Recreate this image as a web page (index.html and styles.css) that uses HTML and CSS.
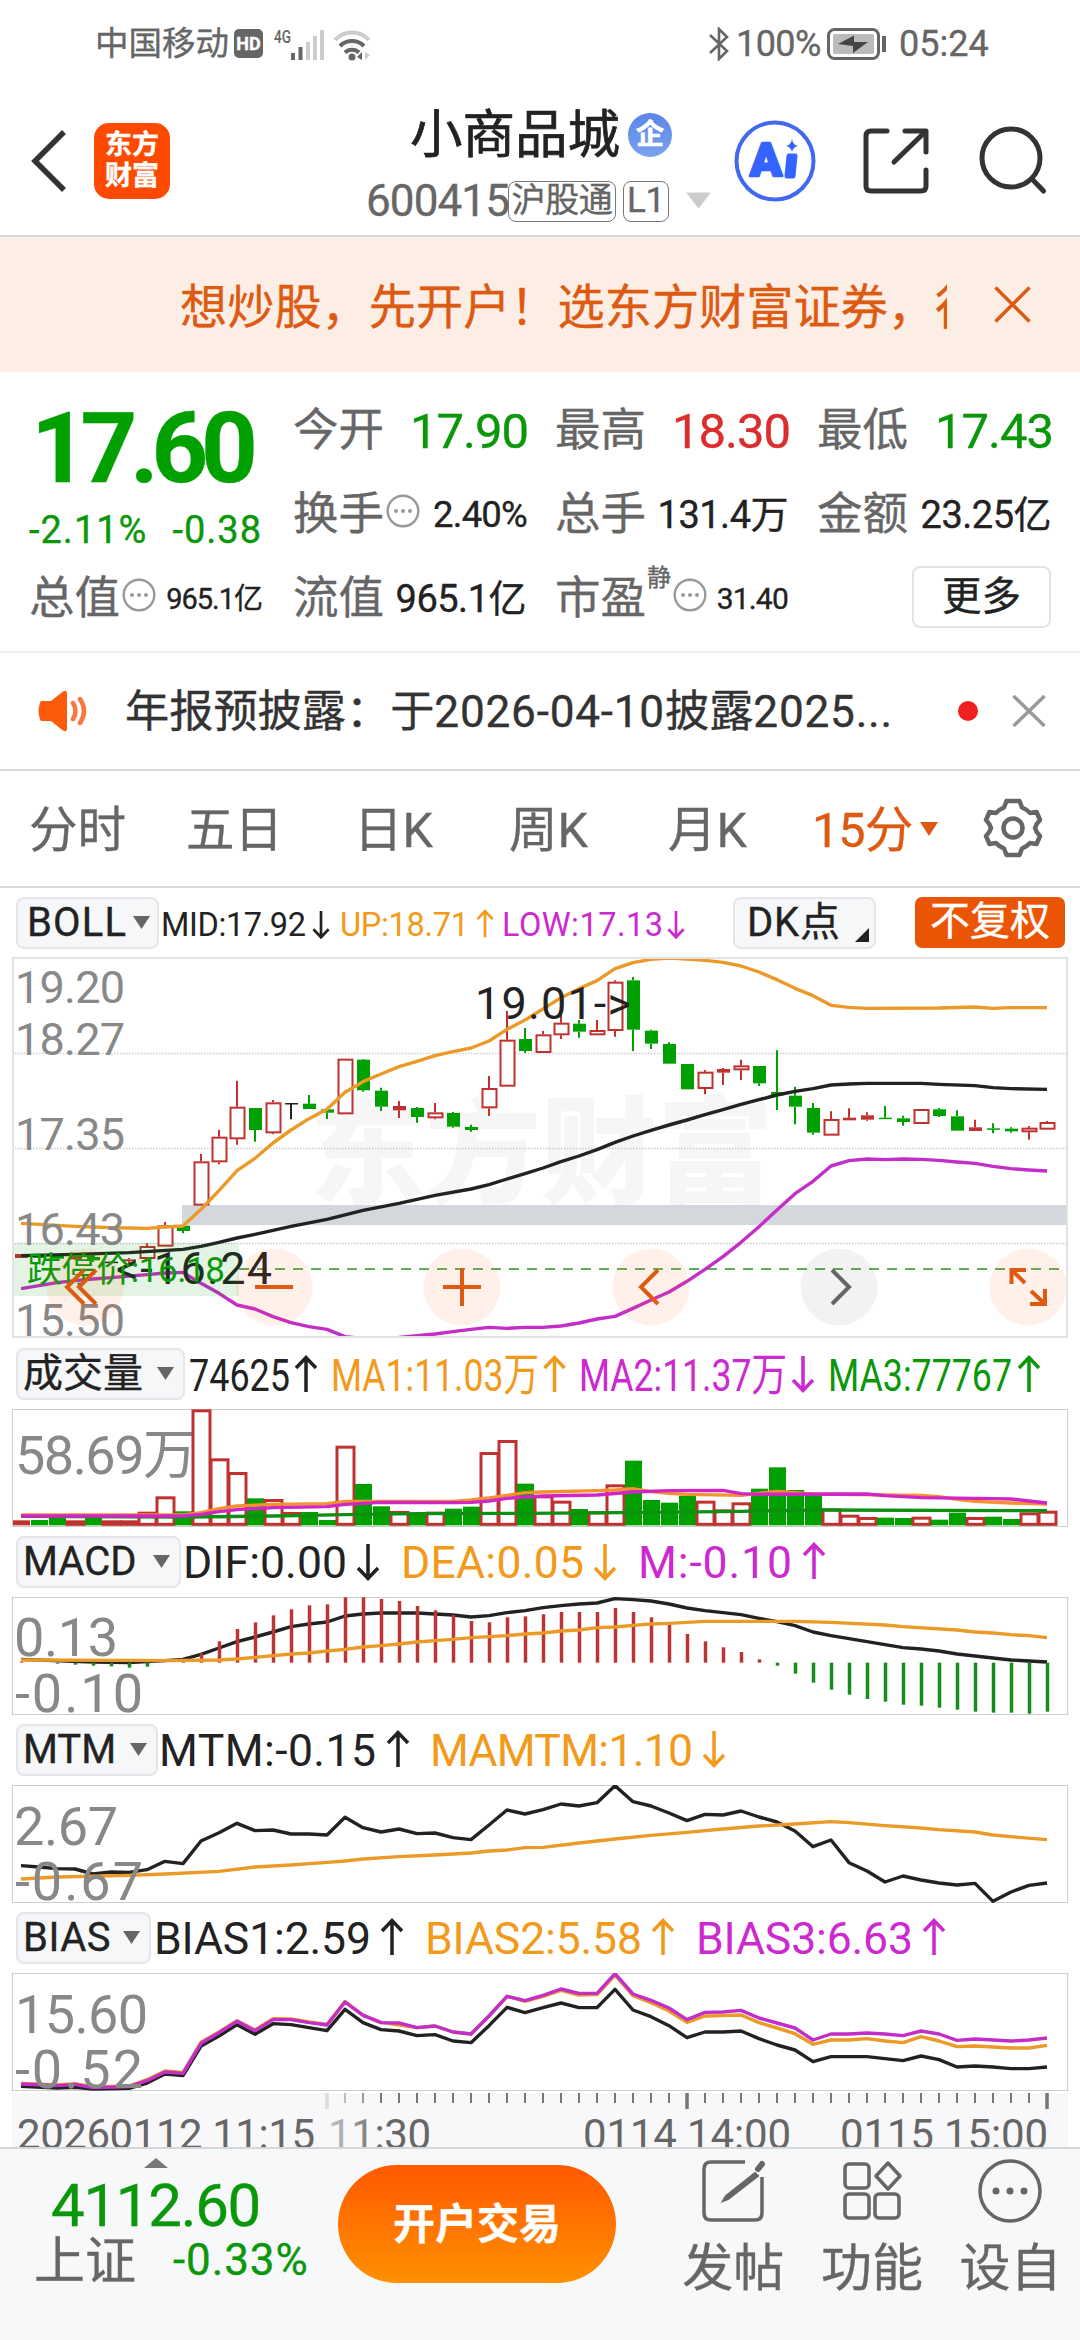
FILE: index.html
```html
<!DOCTYPE html>
<html lang="zh-CN">
<head>
<meta charset="utf-8">
<title>小商品城 600415</title>
<link rel="stylesheet" href="styles.css">
</head>
<body>
<svg width="0" height="0" class="defs" aria-hidden="true">
  <defs>
    <path id="up" d="M0 36V1.5M-10 12L0 1.5L10 12"/>
    <path id="down" d="M0 0V34.5M-10 24L0 34.5L10 24"/>
    <g id="more"><circle cx="17" cy="17" r="15.3" fill="none" stroke="#999" stroke-width="2.4"/><g fill="#999"><circle cx="10" cy="17" r="2"/><circle cx="17" cy="17" r="2"/><circle cx="24" cy="17" r="2"/></g></g>
    <path id="tri" d="M0 0H17L8.5 13Z"/>
  </defs>
</svg>

<div class="status">
  <span class="carrier">中国移动</span>
  <span class="hd">HD</span>
  <svg class="signal" width="102" height="38" viewBox="270 22 102 38">
    <text x="274" y="40" font-size="18" font-weight="500" textLength="17" lengthAdjust="spacingAndGlyphs" fill="#666">4G</text>
    <g fill="#666"><rect x="291" y="50" width="4" height="7"/><rect x="298.500" y="44" width="4" height="13"/></g>
    <g fill="#ccc"><rect x="306" y="39" width="4" height="18"/><rect x="313" y="33" width="4" height="24"/><rect x="320" y="27" width="4" height="30"/></g>
    <g fill="none" stroke-width="4"><path d="M335 37a23 23 0 0 1 34 0" stroke="#ccc"/><path d="M340 43a17 17 0 0 1 24 0M345 49.500a10 10 0 0 1 14 0" stroke="#666"/></g>
    <circle cx="352" cy="54" r="3.500" fill="#666"/><path d="M357 54l5-5v8z" fill="#666"/><path d="M365 49v8l5-5z" fill="#ccc"/>
  </svg>
  <svg class="bt" width="22" height="34" viewBox="0 0 22 34" fill="none" stroke="#666" stroke-width="2.600"><path d="M2 8L19 24L11 32V2L19 10L2 26"/></svg>
  <span class="pct">100%</span>
  <svg class="battery" width="61" height="32" viewBox="0 0 61 32"><rect x="1.500" y="1.500" width="50" height="29" rx="6" fill="none" stroke="#666" stroke-width="3"/><rect x="6" y="6" width="41" height="20" rx="2" fill="#bbb"/><path d="M11 16L27 7.500V14H41L26 25V18Z" fill="#444"/><path d="M57 8v16" stroke="#666" stroke-width="4"/></svg>
  <span class="clock">05:24</span>
</div>

<header class="header">
  <svg class="back" width="38" height="64" viewBox="0 0 38 64" fill="none" stroke="#333" stroke-width="5.500"><path d="M34 3L5 32L34 61"/></svg>
  <div class="logo"><span>东方</span><span>财富</span></div>
  <div class="title">
    <div class="name">小商品城<span class="badge">企</span></div>
    <div class="code"><span class="num">600415</span><span class="tag">沪股通</span><span class="tag tag-l1">L1</span><svg width="25" height="18" viewBox="0 0 25 18"><path d="M1 1H24L12.500 16Z" fill="#ccc" stroke="#ccc"/></svg></div>
  </div>
  <svg class="tools" width="330" height="90" viewBox="730 115 330 90" fill="none" stroke="#333" stroke-width="5" stroke-linecap="round" stroke-linejoin="round">
    <circle cx="775" cy="161" r="38.500" stroke="#4169f0" stroke-width="4"/>
    <text class="ai" x="750" y="176" textLength="32" lengthAdjust="spacingAndGlyphs" stroke="#3563ff" stroke-width="2.500" fill="#3563ff">A</text>
    <path d="M789 156h6l-2 20h-6z" stroke="#3563ff" stroke-width="5" fill="#3563ff"/>
    <path d="M792 139q1 6 6 7q-5 1-6 6q-1-5-6-6q5-1 6-7z" fill="#3563ff" stroke="none"/>
    <path d="M887 131H871Q866 131 866 136V186Q866 191 871 191H921Q926 191 926 186V170M905 131H926V152M894 162L925 132"/>
    <circle cx="1011" cy="158" r="29"/><path d="M1032 179L1043.500 191"/>
  </svg>
</header>

<div class="banner">
  <div class="marquee">想炒股，先开户！选东方财富证券，行情交易</div>
  <svg width="37" height="37" viewBox="0 0 37 37" stroke="#dd5a12" stroke-width="3.500"><path d="M1.500 1.500L35.500 35.500M35.500 1.500L1.500 35.500"/></svg>
</div>

<section class="quote">
  <div class="price">17.60</div>
  <div class="change"><span>-2.11%</span><span>-0.38</span></div>
  <div class="f a1"><label>今开</label><b class="g lg">17.90</b></div>
  <div class="f b1"><label>最高</label><b class="r lg">18.30</b></div>
  <div class="f c1"><label>最低</label><b class="g lg">17.43</b></div>
  <div class="f a2"><label>换手</label><svg class="info" width="34" height="34"><use href="#more"/></svg><b class="md">2.40%</b></div>
  <div class="f b2"><label>总手</label><b>131.4万</b></div>
  <div class="f c2"><label>金额</label><b>23.25亿</b></div>
  <div class="f z3"><label>总值</label><svg class="info" width="34" height="34"><use href="#more"/></svg><b class="sm">965.1亿</b></div>
  <div class="f a3"><label>流值</label><b>965.1亿</b></div>
  <div class="f b3"><label>市盈</label><sup>静</sup><svg class="info" width="34" height="34"><use href="#more"/></svg><b class="sm2">31.40</b></div>
  <div class="more-btn">更多</div>
</section>

<div class="notice">
  <svg width="50" height="42" viewBox="0 0 50 42"><path d="M2 13Q2 11 4 11H13L25 1.500Q29-1 29 4V38Q29 43 25 40.500L13 31H4Q2 31 2 29Q-1 21 2 13Z" fill="#fe5a0b"/><path d="M35 13Q40 21 35 29M42 9Q50 21 42 33" fill="none" stroke="#f9773a" stroke-width="4.500" stroke-linecap="round"/></svg>
  <span class="msg">年报预披露：于<span class="wide">2026-04-10</span>披露<span class="wide">2025...</span></span>
  <i class="dot"></i>
  <svg width="34" height="32" viewBox="0 0 34 32" stroke="#999" stroke-width="3.500"><path d="M1.500 1L32.500 31M32.500 1L1.500 31"/></svg>
</div>

<nav class="tabs">
  <span>分时</span><span>五日</span><span>日K</span><span>周K</span><span>月K</span>
  <span class="on">15分<svg width="19" height="14" viewBox="0 0 19 14"><path d="M0 0H18L9 14Z" fill="#dd5a12"/></svg></span>
  <svg class="gear" width="60" height="60" viewBox="-30 -30 60 60" fill="none" stroke="#666" stroke-width="4.500" stroke-linejoin="round"><path d="M-6.500-27H6.500L9-20.500Q14-18.500 17-15L23.500-16L27-8Q23-4 22 0Q23 4 27 8L23.500 16L17 15Q14 18.500 9 20.500L6.500 27H-6.500L-9 20.500Q-14 18.500-17 15L-23.500 16L-27 8Q-23 4-22 0Q-23-4-27-8L-23.500-16L-17-15Q-14-18.500-9-20.500Z"/><circle r="9.500"/></svg>
</nav>

<section class="charts">
  <div class="ind top">
    <div class="pick boll"><span>BOLL</span><svg width="17" height="14"><use href="#tri"/></svg></div>
    <svg class="readout" width="570" height="70" viewBox="159 0 570 70">
      <g class="ink"><text x="161" y="48" font-size="32.500" textLength="145">MID:17.92</text><use href="#down" transform="translate(321 23) scale(.76)"/></g>
      <g class="amber"><text x="340" y="48" font-size="32.500" textLength="129">UP:18.71</text><use href="#up" transform="translate(485 22) scale(.76)"/></g>
      <g class="violet"><text x="502" y="48" font-size="32.500" textLength="161">LOW:17.13</text><use href="#down" transform="translate(676 23) scale(.76)"/></g>
    </svg>
    <div class="pick dk"><span>DK点</span><svg width="14" height="14"><path d="M14 0V14H0Z" fill="#222"/></svg></div>
    <div class="adjust">不复权</div>
  </div>

  <svg class="plot main" width="1056" height="381" viewBox="0 0 1056 381">
    <text class="watermark" x="297" y="237" textLength="464">东方财富</text>
    <path class="grid" d="M0 96.500H1056M0 191.500H1056M0 286.500H1056"/>
    <rect x="170" y="248" width="886" height="20" fill="#d4d7dc"/>
    <path d="M227 312H1056" stroke="#5fae5f" stroke-width="2" stroke-dasharray="10 8"/>
    <g id="candles"></g>
    <g id="boll"></g>
    <g class="scale" font-size="45">
      <text x="3" y="45.500" textLength="110">19.20</text><text x="3" y="97.500" textLength="110">18.27</text><text x="3" y="193" textLength="110">17.35</text><text x="3" y="288" textLength="110">16.43</text><text x="3" y="379" textLength="110">15.50</text>
    </g>
    <g class="ink" font-size="45"><text x="463" y="62" textLength="156">19.01-&gt;</text><text x="104" y="327" textLength="156">&lt;-16.24</text></g>
    <path d="M0 286H221Q227 286 227 292V339H0Z" fill="#0a9c0a" fill-opacity=".11"/>
    <text x="15" y="325" font-size="35" textLength="198" fill="#0a9a0a">跌停价:16.18</text>
    <g fill="#ff5a00" fill-opacity=".085"><circle cx="73" cy="330" r="38.500"/><circle cx="262" cy="330" r="38.500"/><circle cx="450" cy="330" r="38.500"/><circle cx="639" cy="330" r="38.500"/><circle cx="1016" cy="330" r="38.500"/></g>
    <circle cx="827" cy="330" r="38.500" fill="#000" fill-opacity=".05"/>
    <g fill="none" stroke="#dd5a12" stroke-width="4">
      <path d="M72 313L55 330L72 347M84 313L67 330L84 347"/>
      <path d="M243 330H281M431 330H469M450 311V349"/>
      <path d="M646 313L629 330L646 347"/>
      <path d="M1014 313H999.500V327M999.500 313L1013 326M1018 347H1033V332M1033 347L1019 334"/>
    </g>
    <path d="M820 313L837 330L820 347" fill="none" stroke="#666" stroke-width="4"/>
    <rect class="frame" x="1" y="1" width="1054" height="379" stroke-width="2" style="stroke:#e3e3e3"/>
  </svg>

  <div class="ind vol">
    <div class="pick"><span>成交量</span><svg width="17" height="14"><use href="#tri"/></svg></div>
    <svg class="readout" width="882" height="71" viewBox="185 0 882 71" font-size="45">
      <g class="ink"><text x="189" y="53" textLength="101" lengthAdjust="spacingAndGlyphs">74625</text><use href="#up" x="306" y="18"/></g>
      <g class="amber"><text x="331" y="53" textLength="208" lengthAdjust="spacingAndGlyphs">MA1:11.03万</text><use href="#up" x="554.500" y="18"/></g>
      <g class="violet"><text x="579" y="53" textLength="208" lengthAdjust="spacingAndGlyphs">MA2:11.37万</text><use href="#down" x="803" y="18"/></g>
      <g class="green"><text x="828" y="53" textLength="184" lengthAdjust="spacingAndGlyphs">MA3:77767</text><use href="#up" x="1029" y="18"/></g>
    </svg>
  </div>
  <svg class="plot" width="1056" height="118" viewBox="0 0 1056 118">
    <rect class="frame" x=".5" y=".5" width="1055" height="117"/>
    <g class="scale" font-size="54"><text x="3" y="65" textLength="182">58.69万</text></g>
    <g id="volume"></g>
  </svg>

  <div class="ind">
    <div class="pick macd"><span>MACD</span><svg width="17" height="14"><use href="#tri"/></svg></div>
    <svg class="readout" width="880" height="70" viewBox="181 0 880 70" font-size="44.500">
      <g class="ink"><text x="183" y="51" textLength="164">DIF:0.00</text><use href="#down" x="368" y="17"/></g>
      <g class="amber"><text x="401" y="51" textLength="183">DEA:0.05</text><use href="#down" x="605" y="17"/></g>
      <g class="violet"><text x="638" y="51" textLength="154">M:-0.10</text><use href="#up" x="814" y="16"/></g>
    </svg>
  </div>
  <svg class="plot" width="1056" height="118" viewBox="0 0 1056 118">
    <rect class="frame" x=".5" y=".5" width="1055" height="117"/>
    <g class="scale" font-size="54"><text x="2" y="59" textLength="104">0.13</text><text x="3" y="115" textLength="128">-0.10</text></g>
    <g id="macd"></g>
  </svg>

  <div class="ind">
    <div class="pick mtm"><span>MTM</span><svg width="17" height="14"><use href="#tri"/></svg></div>
    <svg class="readout" width="880" height="70" viewBox="158 0 880 70" font-size="44.500">
      <g class="ink"><text x="159" y="51" textLength="217">MTM:-0.15</text><use href="#up" x="398" y="16"/></g>
      <g class="amber"><text x="430" y="51" textLength="263">MAMTM:1.10</text><use href="#down" x="714" y="16"/></g>
    </svg>
  </div>
  <svg class="plot" width="1056" height="118" viewBox="0 0 1056 118">
    <rect class="frame" x=".5" y=".5" width="1055" height="117"/>
    <g id="mtm"></g>
    <g class="scale" font-size="54"><text x="2" y="60" textLength="104">2.67</text><text x="3" y="115" textLength="128">-0.67</text></g>
  </svg>

  <div class="ind">
    <div class="pick bias"><span>BIAS</span><svg width="17" height="14"><use href="#tri"/></svg></div>
    <svg class="readout" width="880" height="70" viewBox="151 0 880 70" font-size="44.500">
      <g class="ink"><text x="154" y="51" textLength="217">BIAS1:2.59</text><use href="#up" x="392" y="16"/></g>
      <g class="amber"><text x="425" y="51" textLength="217">BIAS2:5.58</text><use href="#up" x="663" y="16"/></g>
      <g class="violet"><text x="696" y="51" textLength="217">BIAS3:6.63</text><use href="#up" x="934" y="16"/></g>
    </svg>
  </div>
  <svg class="plot" width="1056" height="118" viewBox="0 0 1056 118">
    <rect class="frame" x=".5" y=".5" width="1055" height="117"/>
    <g id="bias"></g>
    <g class="scale" font-size="54"><text x="3" y="60" textLength="133">15.60</text><text x="3" y="115" textLength="128">-0.52</text></g>
  </svg>

  <svg class="axis" width="1056" height="54" viewBox="0 0 1056 54">
    <defs><linearGradient id="fade" gradientUnits="userSpaceOnUse" x1="312" x2="372" y1="0" y2="0"><stop offset="0" stop-color="#ccc"/><stop offset="1" stop-color="#666"/></linearGradient></defs>
    <g id="ticks"></g>
    <g font-size="42" fill="#666"><text x="5" y="56" textLength="298">20260112 11:15</text><text x="316" y="56" textLength="103" fill="url(#fade)">11:30</text><text x="571" y="56" textLength="208">0114 14:00</text><text x="828" y="56" textLength="208">0115 15:00</text></g>
  </svg>
</section>

<footer class="bottom">
  <div class="index">
    <svg width="24" height="10" viewBox="0 0 24 10"><path d="M0 10L12 0L24 10Z" fill="#777"/></svg>
    <div class="ix-val">4112.60</div>
    <div class="ix-row"><span class="ix-name">上证</span><span class="ix-chg">-0.33%</span></div>
  </div>
  <div class="cta">开户交易</div>
  <div class="act"><svg width="64" height="64" viewBox="0 0 64 64" fill="none" stroke="#666" stroke-width="3.500"><path d="M44 3H10Q3 3 3 10V54Q3 61 10 61H54Q61 61 61 54V18"/><path d="M54 14L25 37L22 42L27 40L57 17Z" fill="#666" stroke-width="2"/><path d="M57 10L61 5" stroke-width="6" stroke-linecap="round"/></svg><span>发帖</span></div>
  <div class="act"><svg width="64" height="64" viewBox="0 0 64 64" fill="none" stroke="#666" stroke-width="3.500"><rect x="5" y="5" width="24" height="24" rx="4"/><rect x="5" y="35" width="24" height="24" rx="4"/><rect x="35" y="35" width="24" height="24" rx="4"/><path d="M48 4L60 17L48 30L36 17Z" stroke-linejoin="round"/></svg><span>功能</span></div>
  <div class="act"><svg width="64" height="64" viewBox="0 0 64 64"><circle cx="32" cy="32" r="30" fill="none" stroke="#666" stroke-width="3.500"/><g fill="#666"><circle cx="18" cy="32" r="3.500"/><circle cx="32" cy="32" r="3.500"/><circle cx="46" cy="32" r="3.500"/></g></svg><span>设自</span></div>
</footer>
<script src="charts.js"></script>
</body>
</html>
```

FILE: styles.css
```css
* { box-sizing: border-box; }
body { margin: 0; width: 1080px; height: 2340px; overflow: hidden; background: #fff; color: #222; font-family: Roboto, "Noto Sans CJK SC", sans-serif; line-height: 1; -webkit-text-stroke: .35px; }
svg { display: block; flex: none; }
.defs { position: absolute; }
svg text { font-family: Roboto, "Noto Sans CJK SC", sans-serif; }

/* status bar */
.status { height: 80px; padding: 7px 0 0 95px; display: flex; align-items: center; color: #666; white-space: nowrap; }
.carrier { font-size: 33.5px; width: 139px; }
.hd { width: 29px; height: 29px; border-radius: 5px; background: #666; color: #fff; font-size: 18px; font-weight: 700; line-height: 30px; text-align: center; margin-right: 7px; }
.bt { margin-left: 336px; }
.pct { font-size: 36px; width: 97px; padding-left: 6px; letter-spacing: -.6px; }
.clock { font-size: 36px; margin-left: 11px; }

/* header */
.header { height: 157px; border-bottom: 2px solid #d8d8d8; display: flex; align-items: flex-start; padding-left: 30px; }
.back { margin-top: 49px; }
.logo { margin: 43px 0 0 26px; width: 76px; height: 76px; border-radius: 15px; background: #fe4a00; color: #fff; font-size: 27px; font-weight: 700; display: flex; flex-direction: column; align-items: center; justify-content: center; gap: 4px; }
.title { width: 370px; margin: 28px 0 0 190px; }
.name { font-size: 52.5px; height: 54px; line-height: 54px; margin-left: 50px; display: flex; align-items: center; white-space: nowrap; -webkit-text-stroke: .7px; }
.badge { width: 44px; height: 44px; border-radius: 50%; background: linear-gradient(#5b86e8, #7aa1ec); color: #fff; font-size: 28px; font-weight: 700; line-height: 43px; text-align: center; margin-left: 8px; }
.code { display: flex; align-items: center; height: 42px; margin-top: 18px; margin-left: 6px; color: #666; }
.num { font-size: 44px; letter-spacing: -.9px; width: 142px; }
.tag { height: 41px; width: 108px; border: 1.5px solid #777; border-radius: 8px; font-size: 34px; line-height: 37px; text-align: center; white-space: nowrap; letter-spacing: -.3px; }
.tag-l1 { width: 46px; margin: 0 17px 0 7px; font-size: 35px; }
.tools { margin: 35px 0 0 0; }
.ai { font-size: 46px; font-weight: 900; }

/* banner */
.banner { height: 135px; background: #fdeee5; color: #dd5a12; display: flex; align-items: center; padding-left: 180px; }
.marquee { width: 767px; margin-right: 47px; overflow: hidden; white-space: nowrap; font-size: 47.200px; line-height: 64px; padding-top: 7px; }

/* quote */
.quote { height: 281px; border-bottom: 2px solid #eee; display: grid; grid-template: "p a1 b1 c1" 84px "q a2 b2 c2" 84px "z3 a3 b3 m" 84px / 233px 231px 231px 232px; column-gap: 31px; padding: 17px 0 0 29px; }
.price { grid-area: p; font-size: 99px; font-weight: 700; color: #00a000; letter-spacing: -7.3px; line-height: 118px; padding-left: 2px; }
.change { grid-area: q; display: flex; justify-content: space-between; color: #0a970a; font-size: 38px; padding-top: 38px; letter-spacing: 1px; }
.f { display: flex; align-items: center; justify-content: space-between; white-space: nowrap; }
.f label { font-size: 45.500px; color: #666; }
.f b { font-weight: 400; font-size: 38px; color: #222; letter-spacing: -.5px; margin-right: -2px; }
.f .lg { font-size: 49px; letter-spacing: -1px; margin-right: -4px; }
.f .md { font-size: 36.500px; letter-spacing: -.8px; margin-right: -3px; }
.f .sm { font-size: 29px; letter-spacing: -1px; margin-right: 0; }
.f .sm2 { font-size: 30px; letter-spacing: -.8px; margin-right: -2px; }
.f .g { color: #0a970a; }
.f .r { color: #dc2c2c; }
.info { margin: -8px auto 0 2px; }
.f sup { font-size: 24px; align-self: flex-start; margin: 9px 0 0 1px; color: #666; }
.a1 { grid-area: a1; } .b1 { grid-area: b1; } .c1 { grid-area: c1; }
.a2 { grid-area: a2; } .b2 { grid-area: b2; } .c2 { grid-area: c2; }
.z3 { grid-area: z3; } .a3 { grid-area: a3; } .b3 { grid-area: b3; }
.more-btn { grid-area: m; justify-self: end; align-self: center; width: 139px; height: 62px; margin: -4px -2px 0 0; border: 2px solid #e4e4e4; border-radius: 8px; font-size: 39.500px; line-height: 58px; text-align: center; }

/* notice */
.notice { height: 118px; border-bottom: 2px solid #d8d8d8; display: flex; align-items: center; padding-left: 38px; color: #333; }
.msg { margin-left: 37px; width: 833px; font-size: 44.200px; white-space: nowrap; padding-top: 2px; }
.wide { letter-spacing: .75px; }
.dot { width: 20px; height: 20px; border-radius: 50%; background: #f02020; margin-right: 34px; }

/* period tabs */
.tabs { height: 117px; border-bottom: 2px solid #d8d8d8; display: grid; grid-template-columns: 157px 168px 155px 159px 144px 171px 60px; align-items: center; padding-left: 29px; font-size: 48.500px; color: #666; white-space: nowrap; }
.tabs span { padding-top: 5px; }
.tabs .on { color: #dd5a12; display: flex; align-items: center; gap: 8px; letter-spacing: -.9px; }
.tabs .on svg { margin-top: -4px; }
.gear { margin-top: -2px; }

/* indicator rows */
.ind { height: 70px; display: flex; align-items: center; padding-left: 16px; }
.top { height: 69px; }
.vol { height: 71px; }
.pick { height: 52px; width: 169px; background: #f6f7f9; border: 2px solid #e5e6ea; border-radius: 8px; display: flex; align-items: center; justify-content: space-between; padding: 0 9px 0 5px; font-size: 40px; white-space: nowrap; fill: #666; flex: none; }
.pick.boll { width: 143px; padding: 0 7px 0 9px; letter-spacing: 1.200px; }
.pick.dk { width: 143px; margin-left: 4px; padding: 0 5px 0 12px; letter-spacing: .8px; }
.pick.dk svg { align-self: flex-end; margin-bottom: 5px; }
.pick.macd { width: 165px; } .pick.mtm { width: 142px; } .pick.bias { width: 135px; letter-spacing: .5px; }
.adjust { margin-left: 39px; width: 150px; height: 51px; border-radius: 7px; background: #ea5504; color: #fff; font-size: 40px; line-height: 49px; text-align: center; }
.readout use, .ink use { fill: none; stroke: currentColor; stroke-width: 3.500; }
.readout text { fill: currentColor; }
.ink { color: #222; fill: #222; } .amber { color: #f29a1c; } .violet { color: #cc29cf; } .green { color: #0a970a; }

/* plots */
.plot, .axis { margin: 0 12px; overflow: hidden; }
.frame { fill: none; stroke: #ccc; }
.grid { stroke: #ccc; stroke-width: 1.500; stroke-dasharray: 1.500 1.500; }
.watermark { font-size: 116px; font-weight: 900; fill: #f6f6f6; }
.scale { fill: #888; }
.axis { background: #f8f8fa; margin-top: 2px; }

/* bottom bar */
.bottom { height: 193px; border-top: 2px solid #d4d6d8; background: #f7f8fa; display: flex; align-items: flex-start; }
.index { width: 338px; padding: 9px 0 0 34px; }
.index svg { margin-left: 110px; }
.ix-val { font-size: 60px; color: #0a970a; margin: 8px 0 0 17px; letter-spacing: -1.300px; }
.ix-row { display: flex; align-items: center; margin-top: -6px; height: 62px; }
.ix-name { font-size: 51px; color: #666; width: 139px; }
.ix-chg { font-size: 44px; color: #0a970a; margin-top: -2px; letter-spacing: .9px; }
.cta { width: 278px; height: 118px; margin: 16px 48px 0 0; border-radius: 59px; background: linear-gradient(#ff5900, #ff9000); color: #fff; font-size: 42px; font-weight: 700; line-height: 116px; text-align: center; padding-top: 2px; }
.act { width: 138.600px; display: flex; flex-direction: column; align-items: center; padding-top: 10px; color: #666; font-size: 51px; white-space: nowrap; }
.act span { margin-top: 20px; }
```

FILE: charts.js
```js
// Every plot shares one time axis: 58 bars, 18px apart.
const X = i => 9 + 18 * i;
const RED = '#c0322f', GREEN = '#00a000', INK = '#222', AMBER = '#eb9a28', VIOLET = '#c42ec8';
const put = (id, html) => { document.getElementById(id).innerHTML += html; };

// Levels are stored in third-pixels, measured from each plot's own origin.
const scaleFrom = origin => v => +((v - origin) / 3).toFixed(2);
const line = (y, color, pts, w = 3.4) => {
  const p = [];
  for (let k = 0; k < pts.length; k += 2) p.push(X(pts[k]) + ',' + y(pts[k + 1]));
  return `<polyline points="${p.join(' ')}" fill="none" stroke="${color}" stroke-width="${w}" stroke-linejoin="round"/>`;
};
const seq = list => list.flatMap((v, i) => [i, v]);

// r hollow red, f filled red, g green, k flat bar; then high, body top, body bottom, low
let y = scaleFrom(51);
const bars = [
  'f942 942 954 954','g946 946 954 954','g943 946 956 958','f940 946 958 960','g947 951 961 966','k965 965 965 965','f954 958 964 969','r910 918 957 957','r846 856 920 920','g857 857 873 880',
  'r642 664 797 797','r570 590 667 673','r422 500 598 614','g504 504 570 605','r480 487 580 583','k489 489 489 538','g465 491 507 507','g507 508 518 537','r356 356 523 523','g357 359 451 455',
  'g443 452 500 513','f483 498 511 534','g501 504 531 548','r489 517 535 538','g516 519 560 563','g554 561 570 575','r408 444 505 528','r213 299 440 440','g264 297 333 338','r273 283 339 339',
  'r224 248 286 297','g240 251 275 293','r240 270 286 286','r121 125 273 290','g111 121 269 333','g269 272 311 327','g307 312 371 372','g372 372 448 448','r390 395 447 463','f384 387 398 435',
  'r359 376 391 420','g378 378 430 438','g331 456 466 510','g440 467 500 553','g489 504 578 584','r514 537 587 587','f505 533 541 541','f517 526 539 542','g498 533 536 536','g527 535 546 557',
  'r507 507 552 552','g504 508 528 531','g511 529 572 572','f539 562 573 573','g550 565 567 580','g562 566 574 578','r558 563 577 599','r543 546 569 569'];
put('candles', bars.map((s, i) => {
  const [h, t, b, l] = s.slice(1).split(' ').map(v => y(+v)), k = s[0], x = X(i);
  const c = k === 'g' ? GREEN : k === 'k' ? INK : RED;
  let out = `<path d="M${x} ${h}V${t}M${x} ${b}V${l}" stroke="${c}" stroke-width="2"/>`;
  if (k === 'r') out += `<rect x="${x - 6.5}" y="${t + 1}" width="14" height="${Math.max(b - t - 2, 2)}" fill="#fff" stroke="${c}" stroke-width="2"/>`;
  else out += `<rect x="${x - 6}" y="${t}" width="13" height="${Math.max(b - t, 1.5)}" fill="${c}"/>`;
  return out;
}).join(''));

put('boll', line(y, AMBER, [0,850,1,853,2,856,3,859,4,861,5,863,6,864,7,865,8,861,9,858,10,808,11,752,12,692,13,655,14,609,15,570,16,536,17,508,18,457,19,425,20,402,21,380,22,364,23,347,24,335,25,324,26,303,27,268,28,240,29,207,30,173,31,146,32,122,33,86,34,68,35,58,36,54,37,57,38,61,39,67,40,78,41,96,42,119,43,145,44,167,45,196,46,202,47,205,51,204,53,201,54,205,55,203,57,203])
  + line(y, INK, [0,947,3,943,6,938,9,928,10,919,11,907,12,894,13,883,15,859,17,838,19,811,21,790,23,766,25,747,26,734,27,717,28,701,29,684,30,665,31,648,32,629,33,607,34,588,35,571,36,555,37,540,38,524,39,509,40,493,41,479,42,465,43,454,44,446,45,435,46,432,47,430,50,430,51,433,53,437,54,443,55,446,57,448])
  + line(y, VIOLET, [0,1046,1,1037,2,1028,3,1022,4,1017,5,1013,7,1004,8,999,9,997,10,1030,11,1060,12,1095,13,1107,14,1130,15,1148,16,1160,17,1168,18,1190,19,1195,20,1195,21,1192,22,1187,23,1182,24,1175,25,1168,26,1162,27,1165,28,1162,29,1162,30,1158,31,1149,32,1137,33,1129,34,1105,35,1080,36,1056,37,1024,38,988,39,950,40,907,41,860,42,810,43,761,44,724,45,678,46,662,47,657,48,659,49,657,50,658,51,661,52,666,53,670,54,679,55,686,56,690,57,693]));

// volume: r/g plus bar top, baseline at the frame's foot
y = scaleFrom(207);
put('volume', 'f541 g540 g530 r541 g531 r541 r541 r515 r469 g514 r208 r355 r396 g475 r477 r516 g516 g540 r317 g432 g499 r513 g521 r515 g506 g500 r336 r300 g431 r466 r482 g507 r514 r433 g362 g480 g488 g467 r482 r508 r487 g446 g382 g450 g463 r505 r524 r531 g533 g534 r530 g539 g518 r531 g530 g537 r517 r512'.split(' ').map((s, i) => {
  const t = y(+s.slice(1)), b = y(556), x = X(i);
  return s[0] === 'r' ? `<rect x="${x - 8}" y="${t + 1.5}" width="17" height="${b - t - 2.5}" fill="#fff" stroke="${RED}" stroke-width="3"/>`
    : `<rect x="${x - 8}" y="${t}" width="17" height="${b - t}" fill="${s[0] === 'g' ? GREEN : RED}"/>`;
}).join('')
  + line(y, '#0e8f14', [0,529,9,531,14,528,18,524,22,521,28,520,35,517,40,514,44,510,57,512])
  + line(y, '#f5922d', [0,525,9,525,10,518,11,506,12,498,14,493,17,491,18,484,24,484,25,480,26,474,27,466,28,458,29,456,32,452,33,450,34,446,35,455,36,460,37,463,40,466,41,460,42,454,43,458,44,462,50,466,51,470,52,478,53,484,55,489,57,492])
  + line(y, '#d026c6', [0,528,9,528,10,523,11,515,12,509,14,503,17,500,18,493,20,487,24,488,25,487,26,483,27,475,28,471,29,468,32,465,34,456,36,452,39,451,40,461,41,463,47,462,48,467,50,473,54,476,55,477,56,483,57,489]));

y = scaleFrom(771);
const hist = [965,968,971,974,977,979,983,980,968,962,940,904,867,847,826,808,796,793,772,772,777,783,798,811,825,843,847,832,829,823,816,816,816,804,816,832,853,882,904,922,936,958,977,1001,1028,1049,1064,1077,1085,1094,1097,1103,1109,1115,1118,1118,1121,1115];
put('macd', line(y, INK, [0,958,4,966,6,968,8,962,9,958,10,943,11,924,12,905,13,891,14,876,15,860,16,852,17,846,18,828,19,822,20,819,22,819,24,825,25,831,26,827,27,818,28,812,29,803,30,797,31,792,32,789,33,776,34,779,35,783,36,792,37,804,38,812,39,818,40,824,41,835,42,845,43,857,44,876,45,887,46,896,47,905,48,914,49,923,50,927,51,933,52,942,53,948,54,954,55,960,56,963,57,966])
  + hist.map((v, i) => v === 968 ? '' : `<path d="M${X(i) + 0.5} ${y(968)}V${y(v)}" stroke="${v < 968 ? '#b83634' : '#178c1c'}" stroke-width="3.5"/>`).join('')
  + line(y, AMBER, [0,960,6,961,8,962,11,960,12,957,13,952,15,942,16,939,17,933,18,928,19,921,20,917,21,912,22,906,23,902,24,898,25,893,26,890,27,887,28,882,29,879,30,873,31,870,32,863,33,861,34,856,35,852,36,850,37,847,38,844,43,844,45,847,48,855,49,860,52,870,53,876,54,879,55,884,56,887,57,893]));

y = scaleFrom(195);
put('mtm', line(y, INK, seq([437,441,446,447,462,456,457,449,424,431,363,338,310,332,330,342,342,345,292,323,336,327,341,339,353,359,315,270,282,269,252,258,248,197,245,258,279,302,283,285,273,291,306,333,380,360,428,453,486,468,480,489,495,490,544,516,496,489]))
  + line(y, AMBER, [0,477,2,471,6,466,8,462,11,454,13,441,15,435,17,427,18,423,19,417,21,410,23,405,25,399,26,393,27,390,28,383,29,382,31,369,33,357,35,346,37,337,39,327,41,318,43,312,45,305,46,308,48,317,50,324,51,329,53,336,54,345,55,350,57,359]));

y = scaleFrom(759);
put('bias', line(y, INK, [0,1099,2,1104,3,1102,4,1107,6,1105,7,1089,8,1062,9,1067,10,978,11,948,12,914,13,943,14,911,15,914,16,923,17,932,18,868,19,908,20,929,21,933,22,947,23,944,24,963,25,968,26,917,27,862,28,878,29,863,30,849,31,863,32,863,33,808,34,870,35,890,36,917,37,953,38,936,39,936,40,933,41,956,42,975,43,990,44,1025,45,1010,47,1010,48,1016,49,1022,50,1008,51,1019,52,1041,53,1038,54,1041,55,1046,56,1046,57,1041])
  + line(y, AMBER, [0,1090,2,1095,3,1091,4,1101,6,1098,7,1079,8,1053,9,1057,10,967,11,936,12,902,13,930,14,896,15,897,16,906,17,913,18,845,19,885,20,907,22,923,23,918,24,936,25,942,26,888,27,829,28,844,29,829,30,811,31,825,32,824,33,765,34,827,35,848,36,873,37,907,38,888,39,887,40,885,41,908,42,924,43,941,44,973,45,960,46,960,47,956,48,963,49,968,50,950,51,963,52,980,53,978,55,984,56,984,57,976])
  + line(y, VIOLET, [0,1092,2,1097,3,1093,4,1103,6,1100,7,1082,8,1056,9,1060,10,970,11,938,12,904,13,932,14,899,15,899,16,908,17,915,18,846,19,886,20,908,21,909,22,923,23,918,24,936,25,942,26,888,27,829,28,842,29,826,30,807,31,820,32,820,33,761,34,822,35,841,36,864,37,899,38,877,39,876,40,871,41,894,42,909,43,924,44,960,45,942,46,942,47,939,48,942,49,947,50,933,51,942,52,961,53,957,55,963,56,960,57,954]));

for (let i = 17; i < 58; i++) {
  const major = i === 17 || i === 37 || i === 57;
  const c = i === 17 ? '#ddd' : i === 18 ? '#bbb' : i === 19 ? '#999' : '#777';
  put('ticks', `<path d="M${X(i)} 0V${major ? 16 : 10}" stroke="${c}" stroke-width="${major ? 3.5 : 2}"/>`);
}
```
